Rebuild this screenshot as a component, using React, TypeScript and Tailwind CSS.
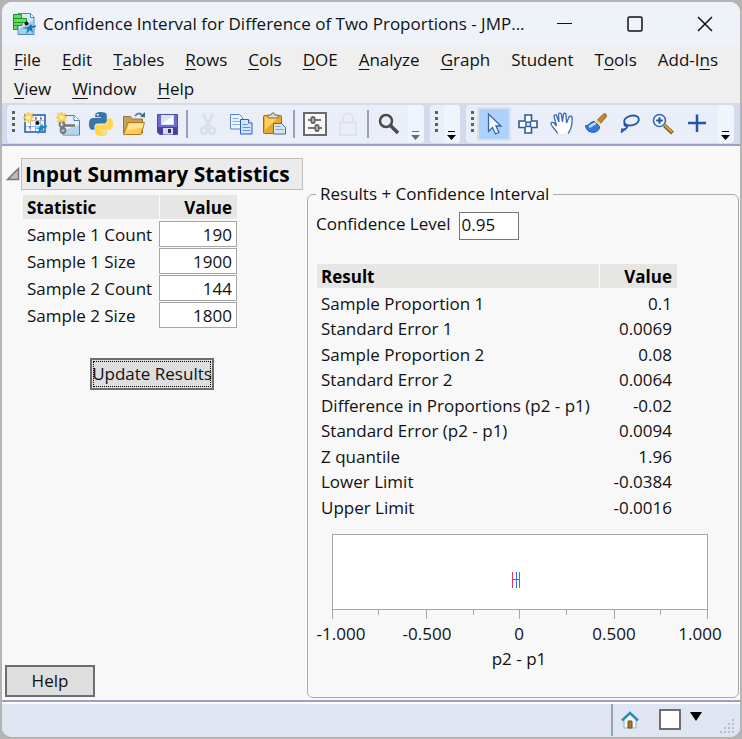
import type { ReactNode } from 'react';

const inputs = [
  { label: 'Sample 1 Count', value: '190' },
  { label: 'Sample 1 Size', value: '1900' },
  { label: 'Sample 2 Count', value: '144' },
  { label: 'Sample 2 Size', value: '1800' },
];

const results = [
  ['Sample Proportion 1', '0.1'],
  ['Standard Error 1', '0.0069'],
  ['Sample Proportion 2', '0.08'],
  ['Standard Error 2', '0.0064'],
  ['Difference in Proportions (p2 - p1)', '-0.02'],
  ['Standard Error (p2 - p1)', '0.0094'],
  ['Z quantile', '1.96'],
  ['Lower Limit', '-0.0384'],
  ['Upper Limit', '-0.0016'],
];

// Each entry: text before the access key, the access key, text after it
const menus = [
  ['', 'F', 'ile'],
  ['', 'E', 'dit'],
  ['', 'T', 'ables'],
  ['', 'R', 'ows'],
  ['', 'C', 'ols'],
  ['', 'D', 'OE'],
  ['', 'A', 'nalyze'],
  ['', 'G', 'raph'],
  ['Student', '', ''],
  ['T', 'o', 'ols'],
  ['Add-I', 'n', 's'],
  ['', 'V', 'iew'],
  ['', 'W', 'indow'],
  ['', 'H', 'elp'],
];

function Icon({ children }: { children: ReactNode }) {
  return (
    <svg width="24" height="24" viewBox="0 0 24 24" fill="none" aria-hidden="true">
      {children}
    </svg>
  );
}

function Burst() {
  return (
    <g stroke="#f3cb55" strokeWidth="1.800">
      <path d="M5.500 0v11M0 5.500h11M1.200 1.200l8.600 8.600M9.800 1.200L1.200 9.800" />
      <circle cx="5.500" cy="5.500" r="3" fill="#fff0a0" stroke="#f5d060" />
    </g>
  );
}

function AppIcon() {
  return (
    <svg width="24" height="24" viewBox="0 0 24 24" fill="none" aria-hidden="true">
      <path d="M5 1.500h12.500l3.500 3.500v17.500H5z" fill="#d5e9f8" stroke="#4d87b5" />
      <path d="M17.500 1.500v4H21" fill="#fff" stroke="#4d87b5" />
      <path d="M6 17l14-9v14H6z" fill="#a3cdec" />
      <path d="M.5 2.500h8v4h5v4H9v3H4.500v4H.5z" fill="#70d860" stroke="#159a25" />
      <path d="M.5 6.500h8M.5 10.500h8M.5 13.500h4" stroke="#159a25" />
      <circle cx="13.500" cy="11.500" r="2" fill="#111" />
      <path d="M9 16l6-1 3-3 1 2 4-.5v1.500l-4 1 1 5-3-3-4 4 1.500-5z" fill="#1977b3" />
    </svg>
  );
}

function NewTableIcon() {
  return (
    <Icon>
      <rect x="2" y="3" width="20" height="17" fill="#f3f8ff" stroke="#2a62b0" strokeWidth="1.600" />
      <path d="M7.500 4v15M12.500 4v15M17.500 4v15M3 8.500h18M3 14.500h18" stroke="#9dbfe8" />
      <path d="M12 6.500h2M17 6.500h2M6 15.500h2" stroke="#d55" strokeWidth="2" />
      <Burst />
      <circle cx="14.500" cy="11" r="2" fill="#111" />
      <path d="M11 16l5-.5 3-3.500 1 2 4-.5v1.500l-4 1.500 1 5-2.500-3.500-4 4.500 1.500-5.500z" fill="#1c86c4" />
    </Icon>
  );
}

function NewScriptIcon() {
  return (
    <Icon>
      <path d="M7 3.500h11l5.500 5V23H7z" fill="#e4f0fb" stroke="#3f7ebc" />
      <path d="M7.500 18l15.500-5v9.500H7.500z" fill="#b4d3ee" />
      <path d="M18 3.500v5h5" fill="#fff" stroke="#3f7ebc" />
      <path d="M8 13.500h11" stroke="#777" strokeWidth="2.500" />
      <circle cx="6" cy="12.500" r="2.500" stroke="#777" strokeWidth="1.800" />
      <circle cx="7" cy="18.500" r="2.500" stroke="#777" strokeWidth="1.800" />
      <Burst />
    </Icon>
  );
}

function PythonIcon() {
  return (
    <Icon>
      <path
        d="M11.900 0C6 0 6.300 2.600 6.300 2.600v2.700h5.700v.8H4S0 5.700 0 11.900s3.400 5.900 3.400 5.900h2.100v-2.900s-.1-3.400 3.400-3.400h5.700s3.200.1 3.200-3.100V3.200S18.300 0 11.900 0zM8.800 1.800a1 1 0 110 2.100 1 1 0 010-2.100z"
        fill="#3a77a8"
      />
      <path
        d="M12.100 24c5.900 0 5.600-2.600 5.600-2.600v-2.700H12v-.8h8s4 .4 4-5.800-3.400-5.900-3.400-5.900h-2.100v2.900s.1 3.400-3.400 3.400H9.400s-3.200-.1-3.200 3.100v5.200S5.700 24 12.100 24zm3.100-1.800a1 1 0 110-2.100 1 1 0 010 2.100z"
        fill="#ffd848"
      />
    </Icon>
  );
}

function OpenIcon() {
  return (
    <Icon>
      <path d="M1.500 4.500h7l2 2.500h10v14h-19z" fill="#c3a15a" stroke="#98743a" />
      <path d="M6 10.500h16.500l-3.500 12H1.500z" fill="#ffc94e" stroke="#b07a20" />
      <path d="M7 11.500h14.500l-1 4L5 18.500z" fill="#ffe695" />
      <path d="M13 4c3-4 6-3 8 .5" stroke="#66829f" strokeWidth="2" />
      <path d="M18 4.500l5 1V0z" fill="#4a6788" />
    </Icon>
  );
}

function SaveIcon() {
  return (
    <Icon>
      <path d="M2.500 2.500h20v20h-18l-2-2z" fill="#706ad0" stroke="#4f49aa" />
      <path d="M3 15h19v7H5l-2-2z" fill="#4840a8" />
      <path d="M6 3h13v10H6z" fill="#d5e4f7" />
      <path d="M7 12l11-8v8z" fill="#fff" />
      <path d="M8 16h10v6.500H8z" fill="#d9dae9" />
      <path d="M13 17h3v4h-3z" fill="#302a80" />
    </Icon>
  );
}

function CutIcon() {
  return (
    <Icon>
      <g stroke="#d6deeb" strokeWidth="2.500">
        <path d="M7 2l7 13M17 2l-7 13" />
        <circle cx="8" cy="18.500" r="3" />
        <circle cx="16" cy="18.500" r="3" />
      </g>
    </Icon>
  );
}

function CopyIcon() {
  return (
    <Icon>
      <path d="M1.500 2.500h9l3 3V17h-12z" fill="#edf4ff" stroke="#5485d0" />
      <path d="M3.500 6.500h6M3.500 9.500h8M3.500 12.500h8" stroke="#8ab0e8" />
      <path d="M11.500 7.500h8l3.500 3.500v11H11.500z" fill="#d7e6ff" stroke="#2c5fbd" />
      <path d="M19.500 7.500V11H23" fill="#fff" stroke="#2c5fbd" />
      <path d="M13.500 12.500h5M13.500 15.500h8M13.500 18.500h8" stroke="#6795e0" />
    </Icon>
  );
}

function PasteIcon() {
  return (
    <Icon>
      <rect x="1.500" y="3.500" width="18" height="18" rx="1" fill="#e6a92c" stroke="#9c6b17" />
      <path d="M3 5h14L3 18z" fill="#ffd05c" />
      <path d="M6 6V3h3l1-2h2l1 2h3v3z" fill="#d8dadd" stroke="#80703f" />
      <path d="M11.500 11.500h8l4 4v6.500h-12z" fill="#d6e3f5" stroke="#54698a" />
      <path d="M13.500 14.500h5M13.500 17.500h8" stroke="#8ba2c6" />
    </Icon>
  );
}

function SettingsIcon() {
  return (
    <Icon>
      <rect x="1" y="1" width="22" height="22" fill="#fafafa" stroke="#6b6b6b" strokeWidth="2" />
      <path d="M5 8h4M12 8h6M5 16h7M16 16h3" stroke="#777" strokeWidth="2" />
      <rect x="8.500" y="5" width="3" height="6" rx="1.500" stroke="#666" strokeWidth="2" />
      <rect x="12.500" y="13" width="3" height="6" rx="1.500" stroke="#666" strokeWidth="2" />
    </Icon>
  );
}

function LockIcon() {
  return (
    <Icon>
      <path d="M4 10.500h16V23H4zM7 10V6.500a5 5 0 0110 0V10" stroke="#dfe2ea" strokeWidth="2" />
    </Icon>
  );
}

function SearchIcon() {
  return (
    <Icon>
      <circle cx="9" cy="9" r="6" stroke="#4a4a4a" strokeWidth="2.500" />
      <path d="M13.500 13.500l7.500 7.500" stroke="#4a4a4a" strokeWidth="3.500" />
    </Icon>
  );
}

function ArrowIcon() {
  return (
    <Icon>
      <path
        d="M6.500 2v17.500l4-4 3 6.500 3.500-1.500-3-6.500h5z"
        fill="#f1f6ff"
        stroke="#3a64ac"
        strokeWidth="1.300"
      />
    </Icon>
  );
}

function CrossIcon() {
  return (
    <Icon>
      <path d="M9 3h6.500v6H21v6.500h-5.500V21H9v-5.500H3V9h6z" fill="#fff" stroke="#2a58a8" strokeWidth="1.600" />
      <rect x="10" y="10" width="4.500" height="4.500" fill="#d8e6fa" stroke="#2a58a8" strokeWidth="1.400" />
    </Icon>
  );
}

function HandIcon() {
  return (
    <Icon>
      <path
        d="M7.500 21.500c-.5-3-6-6.500-6.500-9.500-.3-1.600 2-2.200 3-1l2.500 3L4 4.500c0-1.800 2.200-2 2.600-.5L9 10 8.500 2.500c0-1.800 2.500-1.800 2.800 0L12.500 10l.8-7.500c.2-1.800 2.700-1.600 2.700.2L16.500 11l2.500-6c.8-1.700 3.500-.8 3.200 1C21.500 12 23 15 18 21.500"
        fill="#fff"
        stroke="#3867b5"
        strokeWidth="1.300"
      />
    </Icon>
  );
}

function BrushIcon() {
  return (
    <Icon>
      <path d="M13 8.500l6-6c2-2 4.500.5 3 2.500l-6 7z" fill="#c98a28" stroke="#86570f" />
      <path d="M11.500 8.500l5 4.500" stroke="#ecd9a8" strokeWidth="2.500" />
      <path d="M1.500 13.500c3 1 5-4.500 9-4l5 5c0 5-5 6.500-8.500 5.500C4 19.500 2 17 1.500 13.500z" fill="#367bdc" stroke="#1c52ac" />
      <path d="M5 14.500c3 0 4-3.500 7-3" stroke="#b9dbff" strokeWidth="2.500" />
    </Icon>
  );
}

function LassoIcon() {
  return (
    <Icon>
      <ellipse cx="13.500" cy="8.500" rx="7.500" ry="4.800" stroke="#2456a6" strokeWidth="1.800" transform="rotate(-14 13.500 8.500)" />
      <path d="M7 11c-2 2 1 4 3 2.500M9 13.500c1 2-1 3-2.500 3.500L3 20.500M3 17.500h5" stroke="#2456a6" strokeWidth="1.800" />
    </Icon>
  );
}

function MagnifierIcon() {
  return (
    <Icon>
      <path d="M13.500 13.500l8 7.500" stroke="#8a5c16" strokeWidth="4" />
      <path d="M14 13.500l7 6.500" stroke="#d9a13b" strokeWidth="1.800" />
      <circle cx="8.500" cy="8.500" r="6" fill="#eaf6ff" stroke="#3668b5" strokeWidth="1.600" />
      <path d="M8.500 5.200v6.600M5.200 8.500h6.600" stroke="#2456a6" strokeWidth="2" />
    </Icon>
  );
}

function PlusIcon() {
  return (
    <Icon>
      <path d="M12 2.500v17.500M3 11h18" stroke="#2456a6" strokeWidth="2.500" />
    </Icon>
  );
}

function Grip() {
  return (
    <span className="flex flex-col gap-[3px] self-start pt-[6px]" aria-hidden="true">
      <span className="size-[3px] bg-[#5f5f5f]" />
      <span className="size-[3px] bg-[#5f5f5f]" />
      <span className="size-[3px] bg-[#5f5f5f]" />
      <span className="size-[3px] bg-[#5f5f5f]" />
    </span>
  );
}

function Tool({ label, disabled, children }: { label: string; disabled?: boolean; children: ReactNode }) {
  return (
    <button type="button" aria-label={label} disabled={disabled} className="flex h-9 w-[33px] items-center justify-center">
      {children}
    </button>
  );
}

function Separator() {
  return (
    <span className="flex w-[7px] justify-center">
      <span className="h-7 w-[2px] bg-[#9c9fb8]" />
    </span>
  );
}

function Overflow({ label, muted }: { label: string; muted?: boolean }) {
  return (
    <button
      type="button"
      aria-label={label}
      className={`ml-auto flex w-4 items-end justify-center self-stretch rounded-r bg-[#f0f5fd] pb-[3px] pr-[2px] ${muted ? 'text-[#6a6a6a]' : 'text-black'}`}
    >
      <svg width="9" height="9" viewBox="0 0 9 9" fill="currentColor" aria-hidden="true">
        <path d="M1 0h7v1H1zM0 4h9L4.500 9z" />
      </svg>
    </button>
  );
}

function IntervalChart() {
  const ticks = [
    [16, 9],
    [62, 5],
    [110, 9],
    [157, 5],
    [203, 9],
    [250, 5],
    [298, 9],
    [344, 5],
    [391, 9],
  ];
  const labels: [number, string][] = [
    [25, '-1.000'],
    [111, '-0.500'],
    [203, '0'],
    [298, '0.500'],
    [384, '1.000'],
  ];
  return (
    <svg viewBox="0 0 410 145" width="410" height="145" role="img" aria-label="Confidence interval for p2 - p1" className="mt-[10px] block">
      <rect x="16.500" y="4.500" width="375" height="75" fill="#fff" stroke="#a6a6a6" />
      {ticks.map(([x, length]) => (
        <rect key={x} x={x} y="80" width="1" height={length} fill="#a6a6a6" />
      ))}
      <path d="M196.500 42v16M203.500 42v16M197 49.500h7" stroke="#ee3355" />
      <path d="M200.500 42v16" stroke="#2f6fee" />
      {labels.map(([x, text]) => (
        <text key={text} x={x} y="110" textAnchor="middle" fontSize="17" fill="#111">
          {text}
        </text>
      ))}
      <text x="203" y="135" textAnchor="middle" fontSize="17" fill="#111">
        p2 - p1
      </text>
    </svg>
  );
}

export default function App() {
  return (
    <div className="flex min-h-screen flex-col bg-[#b4b4b4] p-[2px] font-['Open_Sans','Noto_Sans',sans-serif] text-[17px] leading-6 text-[#111]">
      <div className="flex flex-1 flex-col overflow-hidden rounded-[10px] bg-[#f8f8f8]">
        <header className="flex h-[43px] items-center bg-[#eef3f9] pl-[11px]">
          <AppIcon />
          <h1 className="ml-[6px] min-w-0 flex-1 truncate">
            Confidence Interval for Difference of Two Proportions - JMP...
          </h1>
          <div className="flex">
            <button type="button" aria-label="Minimize" className="flex h-10 w-[70px] items-center justify-center">
              <svg width="16" height="16" stroke="#111" strokeWidth="1"><path d="M0 7.500h15" /></svg>
            </button>
            <button type="button" aria-label="Maximize" className="flex h-10 w-[70px] items-center justify-center">
              <svg width="16" height="16" fill="none" stroke="#111" strokeWidth="1.500"><rect x="1" y="1" width="14" height="14" rx="1.500" /></svg>
            </button>
            <button type="button" aria-label="Close" className="flex h-10 w-[70px] items-center justify-center">
              <svg width="16" height="16" stroke="#111" strokeWidth="1.500"><path d="M1 1l14 14M15 1L1 15" /></svg>
            </button>
          </div>
        </header>

        <nav className="flex flex-wrap gap-x-[21px] bg-[#efefef] pl-3">
          {menus.map(([before, key, after]) => (
            <button type="button" key={before + key + after} className="h-[29px] whitespace-nowrap pt-px leading-6">
              {before}
              <span className="underline underline-offset-[3px]">{key}</span>
              {after}
            </button>
          ))}
        </nav>

        <div className="flex h-[43px] gap-[6px] border-b-2 border-[#9aa1cb] bg-[#d3daee] pl-[5px] pt-[2px]" role="toolbar" aria-label="Tools">
          <div className="flex h-[38px] w-[417px] items-center rounded bg-[#eaeef8] pl-[5px]">
            <Grip />
            <span className="w-[3px]" />
            <Tool label="New Data Table"><NewTableIcon /></Tool>
            <Tool label="New Script"><NewScriptIcon /></Tool>
            <Tool label="New Python Script"><PythonIcon /></Tool>
            <Tool label="Open"><OpenIcon /></Tool>
            <Tool label="Save"><SaveIcon /></Tool>
            <Separator />
            <span className="w-px" />
            <Tool label="Cut" disabled><CutIcon /></Tool>
            <Tool label="Copy"><CopyIcon /></Tool>
            <Tool label="Paste"><PasteIcon /></Tool>
            <Separator />
            <span className="w-px" />
            <Tool label="Preferences"><SettingsIcon /></Tool>
            <Tool label="Lock" disabled><LockIcon /></Tool>
            <Separator />
            <span className="w-px" />
            <Tool label="Search"><SearchIcon /></Tool>
            <Overflow label="More file tools" muted />
          </div>
          <div className="flex h-[38px] w-[30px] items-center rounded bg-[#eaeef8] pl-[5px]">
            <Grip />
            <Overflow label="More toolbars" />
          </div>
          <div className="flex h-[38px] w-[268px] items-center rounded bg-[#eaeef8] pl-[5px]">
            <Grip />
            <span className="w-[3px]" />
            <button type="button" aria-label="Arrow" aria-pressed="true" className="flex h-[34px] w-[34px] items-center justify-center border-2 border-[#dfe1ea] bg-[#afd2fa]">
              <ArrowIcon />
            </button>
            <Tool label="Selection"><CrossIcon /></Tool>
            <span className="w-px" />
            <Tool label="Grabber"><HandIcon /></Tool>
            <span className="w-px" />
            <Tool label="Brush"><BrushIcon /></Tool>
            <span className="w-px" />
            <Tool label="Lasso"><LassoIcon /></Tool>
            <Tool label="Magnifier"><MagnifierIcon /></Tool>
            <span className="w-px" />
            <Tool label="Crosshairs"><PlusIcon /></Tool>
            <Overflow label="More cursor tools" />
          </div>
        </div>

        <main className="flex flex-1">
          <section className="flex w-[305px] shrink-0 flex-col pl-[3px]">
            <div className="mt-3 flex items-center">
              <button type="button" aria-label="Collapse Input Summary Statistics" className="flex w-4 justify-center">
                <svg width="14" height="14" viewBox="0 0 14 14"><path d="M12.500 1.500v11h-11z" fill="#bdbdbd" stroke="#757575" strokeWidth="1.500" /></svg>
              </button>
              <h2 className="h-8 w-[282px] border border-[#bfbfbf] bg-[#ebebeb] pl-[3px] text-[21px] font-bold leading-[30px] text-black">
                Input Summary Statistics
              </h2>
            </div>
            <table className="ml-[18px] mt-[5px] w-[214px] table-fixed border-separate border-spacing-0">
              <thead>
                <tr className="h-6 text-black">
                  <th className="w-[136px] bg-[#e6e6e4] p-0 pl-1 text-left leading-5 pt-[2px]">Statistic</th>
                  <th className="border-l border-[#f8f8f8] bg-[#e6e6e4] p-0 pr-[5px] pt-[2px] text-right leading-5">Value</th>
                </tr>
              </thead>
              <tbody className="before:block before:h-px">
                {inputs.map((row, i) => (
                  <tr key={row.label}>
                    <td className="p-0 pl-1 pt-[2px]">
                      <label htmlFor={`sample-${i}`} className="whitespace-nowrap">{row.label}</label>
                    </td>
                    <td className="p-0 pt-px">
                      <input
                        id={`sample-${i}`}
                        defaultValue={row.value}
                        className="block h-[26px] w-full border border-[#a6a6a6] bg-white pr-1 text-right"
                      />
                    </td>
                  </tr>
                ))}
              </tbody>
            </table>
            <button
              type="button"
              className="ml-[85px] mt-[30px] h-8 w-[124px] whitespace-nowrap border-2 border-[#6e6e6e] bg-[#dedede] outline-1 -outline-offset-4 outline-dotted outline-black"
            >
              Update Results
            </button>
            <button type="button" className="mb-[3px] mt-auto h-8 w-[90px] border-2 border-[#6e6e6e] bg-[#dedede]">
              Help
            </button>
          </section>

          <section className="flex min-w-0 flex-1 pb-[2px] pr-px pt-9">
            <fieldset className="min-w-0 flex-1 rounded-md border border-[#a9a9a9] pl-2">
              <legend className="px-1">Results + Confidence Interval</legend>
              <div className="mt-[6px] flex items-start">
                <label htmlFor="confidence-level">Confidence Level</label>
                <input
                  id="confidence-level"
                  defaultValue="0.95"
                  className="ml-2 h-7 w-[60px] border border-[#767676] bg-white pb-1 pl-[2px]"
                />
              </div>
              <table className="ml-px mt-6 w-[360px] table-fixed border-separate border-spacing-0">
                <thead>
                  <tr className="h-6 text-black">
                    <th className="w-[282px] bg-[#e6e6e4] p-0 pl-1 pt-[2px] text-left leading-5">Result</th>
                    <th className="border-l border-[#f8f8f8] bg-[#e6e6e4] p-0 pr-[5px] pt-[2px] text-right leading-5">Value</th>
                  </tr>
                </thead>
                <tbody className="before:block before:h-[3px]">
                  {results.map(([name, value]) => (
                    <tr key={name} className="odd:h-[25px] even:h-[26px]">
                      <td className="whitespace-nowrap p-0 pl-1">{name}</td>
                      <td className="p-0 pr-[5px] text-right">{value}</td>
                    </tr>
                  ))}
                </tbody>
              </table>
              <IntervalChart />
            </fieldset>
          </section>
        </main>

        <footer className="flex h-[37px] items-center justify-end border-t-2 border-[#9b9ecb] bg-[#dfe6f1] shadow-[inset_0_2px_0_#ffffff]">
          <span className="h-8 w-[2px] bg-[#9c9fb8]" />
          <button type="button" aria-label="Home window" className="ml-[5px] flex size-6 items-center justify-center">
            <svg width="18" height="18" viewBox="0 0 18 18" fill="none" aria-hidden="true">
              <path d="M3 8.500L9 3l6 5.500V17H3z" fill="#f2f7fb" stroke="#93b3c8" />
              <path d="M7 10h4v7H7z" fill="#a5762a" stroke="#75501a" />
              <path d="M1 9.500L9 2l8 7.500" stroke="#2a8bbd" strokeWidth="2.500" />
            </svg>
          </button>
          <input type="checkbox" aria-label="Select window" className="ml-[17px] h-[21px] w-[22px] appearance-none border-2 border-[#6e6e6e] bg-white" />
          <button type="button" aria-label="Window options" className="mb-[5px] ml-[9px]">
            <svg width="12" height="10" viewBox="0 0 12 10" className="block"><path d="M0 0h12L6 9z" /></svg>
          </button>
          <svg width="18" height="18" viewBox="0 0 18 18" fill="#b5c0d6" className="ml-[17px] mr-[3px] self-end" aria-hidden="true">
            <path d="M13 0h2v2h-2zM13 4h2v2h-2zM9 4h2v2H9zM13 8h2v2h-2zM9 8h2v2H9zM5 8h2v2H5zM13 12h2v2h-2zM9 12h2v2H9zM5 12h2v2H5zM1 12h2v2H1z" />
          </svg>
        </footer>
      </div>
    </div>
  );
}
